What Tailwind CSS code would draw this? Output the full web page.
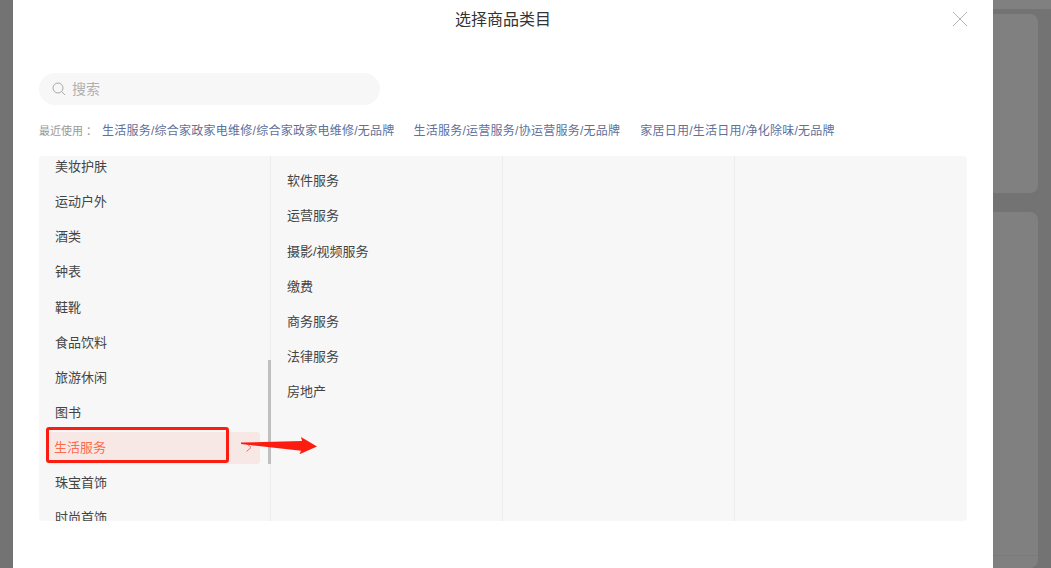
<!DOCTYPE html>
<html lang="zh-CN">
<head>
  <meta charset="UTF-8">
  <title>选择商品类目</title>
  <script src="https://cdn.jsdelivr.net/npm/@tailwindcss/browser@4"></script>
</head>
<body class="h-screen overflow-hidden bg-[#737373] font-['Liberation_Sans','Noto_Sans_CJK_SC',sans-serif]">
  <div class="relative h-[568px] w-[1051px] overflow-hidden">
    <!-- page behind the mask -->
    <div class="absolute left-[993px] top-0 h-[9px] w-[58px] bg-[#808080]"></div>
    <div class="absolute left-[993px] top-[14px] h-[179px] w-[45px] rounded-r-lg bg-[#808080]"></div>
    <div class="absolute left-[993px] top-[212px] h-[356px] w-[45px] rounded-r-lg bg-[#808080]"></div>
    <div class="absolute left-[993px] top-[555px] h-px w-[45px] bg-[#7a7a7a]"></div>

    <!-- modal -->
    <div class="absolute left-[13px] top-0 h-[568px] w-[980px] bg-white px-[26px]">
      <div class="flex h-[40px] items-center justify-center text-[16px] text-[#333]">选择商品类目</div>
      <svg class="absolute right-[26px] top-[12px]" width="14" height="14" viewBox="0 0 14 14" fill="none" stroke="#b5b5b5" stroke-width="1"><path d="M0 0L14 14M14 0L0 14"/></svg>

      <div class="mt-[33px] flex h-[32px] w-[341px] items-center rounded-full bg-[#f7f7f7] pl-[13px] text-[14px] text-[#b0b0b0]">
        <svg class="mr-[6px]" width="14" height="14" viewBox="0 0 14 14" fill="none" stroke="#aaa" stroke-width="1"><circle cx="6" cy="6" r="5"/><path d="M9.6 9.6L13 13"/></svg>
        <span class="mt-[1px]">搜索</span>
      </div>

      <div class="mt-[17px] flex h-[18px] items-center text-[12px] tracking-[0.25px] text-[#5f7099]">
        <span class="w-[63px] text-[11px] tracking-normal text-[#999]">最近使用<span class="ml-[3px]">：</span></span>
        <span class="mr-[19px]">生活服务/综合家政家电维修/综合家政家电维修/无品牌</span>
        <span class="mr-[20px]">生活服务/运营服务/协运营服务/无品牌</span>
        <span>家居日用/生活日用/净化除味/无品牌</span>
      </div>

      <div class="mt-[16px] flex h-[365px] w-[928px] overflow-hidden rounded-[4px] bg-[#f7f7f7] text-[13px] text-[#444]">
        <div class="relative h-full w-[232px] shrink-0 overflow-hidden border-r border-[#ececec]">
          <div class="mt-[-7px] flex flex-col">
            <div class="flex h-[35.2px] items-center pl-[16px]">美妆护肤</div>
            <div class="flex h-[35.2px] items-center pl-[16px]">运动户外</div>
            <div class="flex h-[35.2px] items-center pl-[16px]">酒类</div>
            <div class="flex h-[35.2px] items-center pl-[16px]">钟表</div>
            <div class="flex h-[35.2px] items-center pl-[16px]">鞋靴</div>
            <div class="flex h-[35.2px] items-center pl-[16px]">食品饮料</div>
            <div class="flex h-[35.2px] items-center pl-[16px]">旅游休闲</div>
            <div class="flex h-[35.2px] items-center pl-[16px]">图书</div>
            <div class="my-[1.3px] ml-[8px] mr-[10px] flex h-[32px] items-center justify-between rounded-[3px] bg-[#f7e8e5] pl-[7px] pr-[8px] text-[#ff6a4d]">
              生活服务
              <svg width="6" height="9" viewBox="0 0 6 9" fill="none" stroke="#ff6a4d" stroke-width="1"><path d="M0.5 0.5L5 4.5L0.5 8.5"/></svg>
            </div>
            <div class="flex h-[35.2px] items-center pl-[16px]">珠宝首饰</div>
            <div class="flex h-[35.2px] items-center pl-[16px]">时尚首饰</div>
          </div>
        </div>
        <div class="h-full w-[232px] shrink-0 border-r border-[#ececec] pt-[7.3px]">
          <div class="flex h-[35.2px] items-center pl-[16px]">软件服务</div>
          <div class="flex h-[35.2px] items-center pl-[16px]">运营服务</div>
          <div class="flex h-[35.2px] items-center pl-[16px]">摄影/视频服务</div>
          <div class="flex h-[35.2px] items-center pl-[16px]">缴费</div>
          <div class="flex h-[35.2px] items-center pl-[16px]">商务服务</div>
          <div class="flex h-[35.2px] items-center pl-[16px]">法律服务</div>
          <div class="flex h-[35.2px] items-center pl-[16px]">房地产</div>
        </div>
        <div class="h-full w-[232px] shrink-0 border-r border-[#ececec]"></div>
        <div class="h-full w-[232px] shrink-0"></div>
      </div>
    </div>

    <!-- list scrollbar -->
    <div class="absolute left-[268px] top-[360px] h-[104px] w-[3px] bg-[#bfbfbf]"></div>

    <!-- screenshot annotation -->
    <div class="absolute left-[46px] top-[427px] h-[36px] w-[183px] rounded-[3px] border-[3px] border-[#fb1e10]"></div>
    <svg class="absolute left-[240px] top-[436px]" width="78" height="20" viewBox="0 0 78 20"><path d="M1 6.5L62 5L61 1L77 10.5L59.5 18.3L61 14.7L1 8Z" fill="#fb1e10"/></svg>
  </div>
</body>
</html>
